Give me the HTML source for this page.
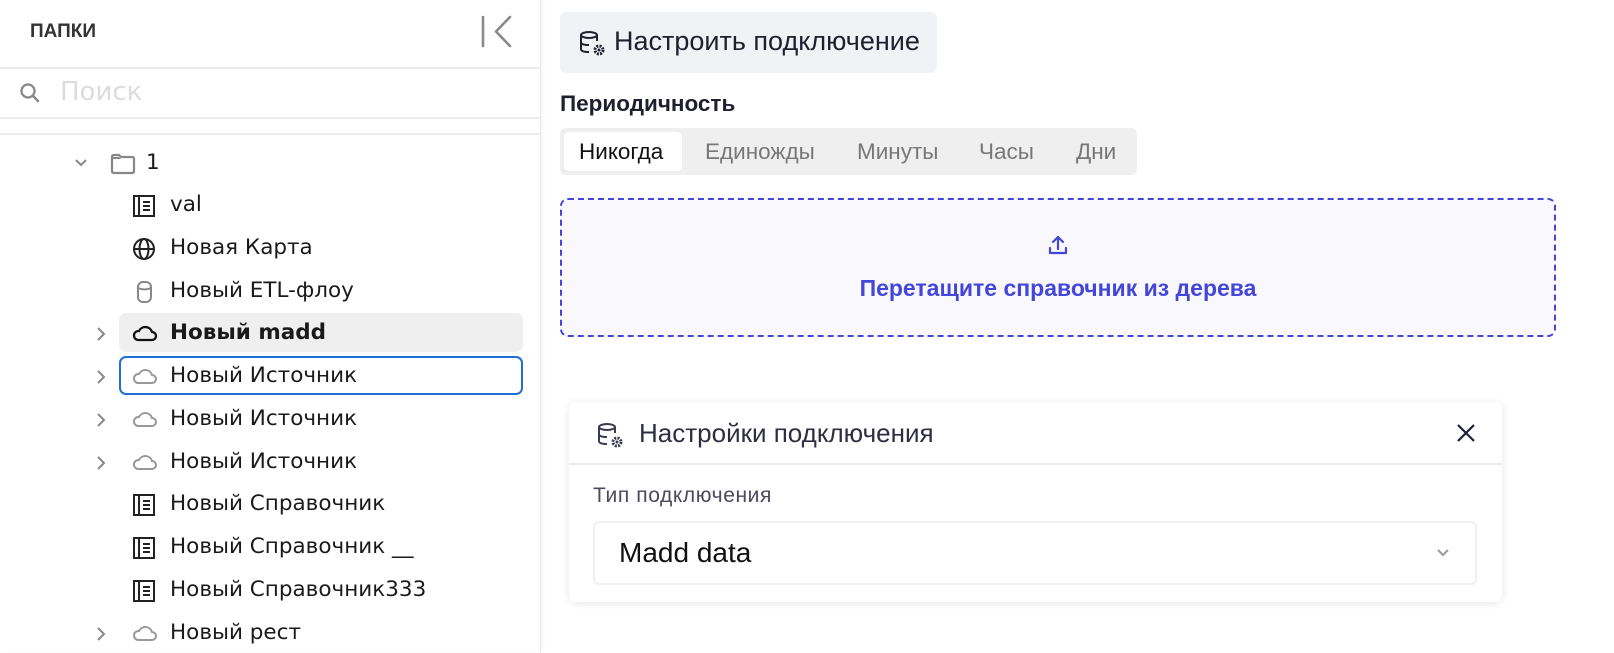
<!DOCTYPE html>
<html><head><meta charset="utf-8">
<style>
*{box-sizing:border-box;margin:0;padding:0}
body{width:1614px;height:652px;overflow:hidden;background:#fff;font-family:"Liberation Sans",sans-serif;position:relative}
.side{position:absolute;left:0;top:0;width:541px;height:652px;background:#fff;border-right:1px solid #e8e8e8;box-shadow:2px 0 4px rgba(0,0,0,.04)}
.abs{position:absolute}
.hl{position:absolute;left:0;width:541px;height:2px;background:#ececec}
.row{position:absolute;left:0;height:40px;width:541px;font-family:"DejaVu Sans",sans-serif;font-size:21.5px;color:#1a1a1a;line-height:40px}
.row .t{position:absolute;left:170px;top:0}
.row svg.ic{position:absolute;left:132px;top:9px}
.row svg.ch{position:absolute;left:94px;top:13px}
.seg{position:absolute;top:0;height:39px;line-height:39px;font-size:22.5px;color:#777}
</style></head><body>
<div class="side">
  <div class="abs" style="left:30px;top:21px;font-size:19px;font-weight:bold;color:#333">ПАПКИ</div>
  <svg class="abs" style="left:476px;top:14px" width="40" height="36" viewBox="0 0 40 36"><path d="M7 3v29M34 3L20 17.5 34 32" stroke="#8a8a8a" stroke-width="2.6" fill="none" stroke-linecap="round" stroke-linejoin="round"/></svg>
  <div class="hl" style="top:67px"></div>
  <svg class="abs" style="left:18px;top:81px" width="24" height="24" viewBox="0 0 24 24"><circle cx="10" cy="10" r="6.5" stroke="#888" stroke-width="2.3" fill="none"/><path d="M15 15l5 5" stroke="#888" stroke-width="2.5" stroke-linecap="round"/></svg>
  <div class="abs" style="left:60px;top:77px;font-family:'DejaVu Sans',sans-serif;font-size:26px;color:#dcdcdc">Поиск</div>
  <div class="hl" style="top:117px"></div>
  <div class="hl" style="top:133px"></div>

  <div class="row" style="top:143px"><svg class="ch" style="left:72px" width="18" height="14" viewBox="0 0 18 14"><path d="M4 4l5 5 5-5" stroke="#888" stroke-width="2" fill="none"/></svg><svg class="ic" style="left:109px" width="28" height="24" viewBox="0 0 28 24"><path d="M3 5q0-2 2-2h5l2 2h11q2 0 2 2v12q0 2-2 2H5q-2 0-2-2z" stroke="#888" stroke-width="2.2" fill="none"/><path d="M3 5h7l2 2H3z" fill="#888"/></svg><span class="t" style="left:146px">1</span></div>
  <div class="row" style="top:185px"><svg class="ic" width="24" height="24" viewBox="0 0 24 24"><rect x="2" y="2" width="20" height="20" stroke="#222" stroke-width="2" fill="none"/><path d="M7 2v20M11 8h7M11 12h7M11 16h7" stroke="#222" stroke-width="2"/></svg><span class="t">val</span></div>
  <div class="row" style="top:228px"><svg class="ic" width="24" height="24" viewBox="0 0 24 24"><circle cx="12" cy="12" r="10" stroke="#222" stroke-width="2" fill="none"/><ellipse cx="12" cy="12" rx="4.5" ry="10" stroke="#222" stroke-width="2" fill="none"/><path d="M2 12h20" stroke="#222" stroke-width="2"/></svg><span class="t">Новая Карта</span></div>
  <div class="row" style="top:271px"><svg class="ic" width="24" height="24" viewBox="0 0 24 24"><rect x="6" y="2" width="13" height="20" rx="5" stroke="#888" stroke-width="2" fill="none"/><path d="M6 8q6.5 3 13 0" stroke="#888" stroke-width="2" fill="none"/></svg><span class="t">Новый ETL-флоу</span></div>
  <div class="abs" style="left:119px;top:313px;width:404px;height:39px;background:#efefef;border-radius:7px"></div>
  <div class="row" style="top:313px"><svg class="ch" width="14" height="16" viewBox="0 0 14 16"><path d="M4 2l6 6-6 6" stroke="#888" stroke-width="2" fill="none"/></svg><svg class="ic" width="26" height="22" viewBox="0 0 26 22"><path d="M6 18h14a4 4 0 000-8 7 7 0 00-13-1 4.5 4.5 0 00-1 9z" stroke="#111" stroke-width="2.3" fill="none"/></svg><span class="t" style="font-weight:bold">Новый madd</span></div>
  <div class="abs" style="left:119px;top:356px;width:404px;height:39px;border:2px solid #1f6fd6;border-radius:7px"></div>
  <div class="row" style="top:356px"><svg class="ch" width="14" height="16" viewBox="0 0 14 16"><path d="M4 2l6 6-6 6" stroke="#888" stroke-width="2" fill="none"/></svg><svg class="ic" width="26" height="22" viewBox="0 0 26 22"><path d="M6 18h14a4 4 0 000-8 7 7 0 00-13-1 4.5 4.5 0 00-1 9z" stroke="#999" stroke-width="2" fill="none"/></svg><span class="t">Новый Источник</span></div>
  <div class="row" style="top:399px"><svg class="ch" width="14" height="16" viewBox="0 0 14 16"><path d="M4 2l6 6-6 6" stroke="#888" stroke-width="2" fill="none"/></svg><svg class="ic" width="26" height="22" viewBox="0 0 26 22"><path d="M6 18h14a4 4 0 000-8 7 7 0 00-13-1 4.5 4.5 0 00-1 9z" stroke="#999" stroke-width="2" fill="none"/></svg><span class="t">Новый Источник</span></div>
  <div class="row" style="top:442px"><svg class="ch" width="14" height="16" viewBox="0 0 14 16"><path d="M4 2l6 6-6 6" stroke="#888" stroke-width="2" fill="none"/></svg><svg class="ic" width="26" height="22" viewBox="0 0 26 22"><path d="M6 18h14a4 4 0 000-8 7 7 0 00-13-1 4.5 4.5 0 00-1 9z" stroke="#999" stroke-width="2" fill="none"/></svg><span class="t">Новый Источник</span></div>
  <div class="row" style="top:484px"><svg class="ic" width="24" height="24" viewBox="0 0 24 24"><rect x="2" y="2" width="20" height="20" stroke="#222" stroke-width="2" fill="none"/><path d="M7 2v20M11 8h7M11 12h7M11 16h7" stroke="#222" stroke-width="2"/></svg><span class="t">Новый Справочник</span></div>
  <div class="row" style="top:527px"><svg class="ic" width="24" height="24" viewBox="0 0 24 24"><rect x="2" y="2" width="20" height="20" stroke="#222" stroke-width="2" fill="none"/><path d="M7 2v20M11 8h7M11 12h7M11 16h7" stroke="#222" stroke-width="2"/></svg><span class="t">Новый Справочник __</span></div>
  <div class="row" style="top:570px"><svg class="ic" width="24" height="24" viewBox="0 0 24 24"><rect x="2" y="2" width="20" height="20" stroke="#222" stroke-width="2" fill="none"/><path d="M7 2v20M11 8h7M11 12h7M11 16h7" stroke="#222" stroke-width="2"/></svg><span class="t">Новый Справочник333</span></div>
  <div class="row" style="top:613px"><svg class="ch" width="14" height="16" viewBox="0 0 14 16"><path d="M4 2l6 6-6 6" stroke="#888" stroke-width="2" fill="none"/></svg><svg class="ic" width="26" height="22" viewBox="0 0 26 22"><path d="M6 18h14a4 4 0 000-8 7 7 0 00-13-1 4.5 4.5 0 00-1 9z" stroke="#999" stroke-width="2" fill="none"/></svg><span class="t">Новый рест</span></div>
</div>

<!-- right -->
<div class="abs" style="left:560px;top:12px;width:377px;height:61px;background:#f1f2f6;border-radius:6px"></div>
<svg class="abs" style="left:578px;top:30px" width="30" height="28" viewBox="0 0 30 28"><ellipse cx="11" cy="5" rx="8" ry="3" stroke="#1f1f2e" stroke-width="2" fill="none"/><path d="M3 5v14q0 3 8 3M19 5v6M3 12q0 3 8 3" stroke="#1f1f2e" stroke-width="2" fill="none"/><circle cx="21" cy="20" r="4" stroke="#1f1f2e" stroke-width="3" fill="none" stroke-dasharray="2 1.2"/><circle cx="21" cy="20" r="1.5" fill="#1f1f2e"/></svg>
<div class="abs" style="left:614px;top:26px;font-size:27px;color:#1f1f2e">Настроить подключение</div>
<div class="abs" style="left:560px;top:91px;font-size:22.5px;font-weight:bold;color:#1f1f2e">Периодичность</div>
<div class="abs" style="left:560px;top:128px;width:577px;height:47px;background:#efefef;border-radius:6px">
  <div class="abs" style="left:4px;top:4px;width:118px;height:39px;background:#fff;border-radius:5px"></div>
  <div class="seg" style="left:19px;top:4px;color:#111">Никогда</div>
  <div class="seg" style="left:145px;top:4px">Единожды</div>
  <div class="seg" style="left:297px;top:4px">Минуты</div>
  <div class="seg" style="left:419px;top:4px">Часы</div>
  <div class="seg" style="left:516px;top:4px">Дни</div>
</div>
<div class="abs" style="left:560px;top:198px;width:996px;height:139px;background:#f9f9fd;border:2px dashed #4346d9;border-radius:8px"></div>
<svg class="abs" style="left:1047px;top:234px" width="22" height="22" viewBox="0 0 22 22"><path d="M11 15V3M6 8l5-5 5 5M3 14v5h16v-5" stroke="#4346d9" stroke-width="2.2" fill="none" stroke-linecap="round" stroke-linejoin="round"/></svg>
<div class="abs" style="left:560px;top:275px;width:996px;text-align:center;font-size:23px;font-weight:bold;color:#4346d9">Перетащите справочник из дерева</div>

<div class="abs" style="left:569px;top:402px;width:933px;height:200px;background:#fff;border-radius:6px;box-shadow:0 1px 8px rgba(0,0,0,.1)">
  <div class="abs" style="left:0;top:61px;width:933px;height:2px;background:#ececec"></div>
  <svg class="abs" style="left:27px;top:20px" width="30" height="28" viewBox="0 0 30 28"><ellipse cx="11" cy="5" rx="8" ry="3" stroke="#3a3a4e" stroke-width="2" fill="none"/><path d="M3 5v14q0 3 8 3M19 5v6M3 12q0 3 8 3" stroke="#3a3a4e" stroke-width="2" fill="none"/><circle cx="21" cy="20" r="4" stroke="#3a3a4e" stroke-width="3" fill="none" stroke-dasharray="2 1.2"/><circle cx="21" cy="20" r="1.5" fill="#3a3a4e"/></svg>
  <div class="abs" style="left:70px;top:16px;font-size:26px;color:#2e2e40">Настройки подключения</div>
  <svg class="abs" style="left:886px;top:20px" width="22" height="22" viewBox="0 0 22 22"><path d="M3 3l16 16M19 3L3 19" stroke="#1f1f3a" stroke-width="2.2"/></svg>
  <div class="abs" style="left:24px;top:82px;font-size:21px;letter-spacing:.6px;color:#4a4a5a">Тип подключения</div>
  <div class="abs" style="left:24px;top:119px;width:884px;height:64px;border:2px solid #efefef;border-radius:6px">
    <div class="abs" style="left:24px;top:14px;font-size:28px;color:#111">Madd data</div>
    <svg class="abs" style="left:840px;top:24px" width="16" height="12" viewBox="0 0 16 12"><path d="M3 3l5 5 5-5" stroke="#999" stroke-width="2" fill="none"/></svg>
  </div>
</div>
</body></html>
